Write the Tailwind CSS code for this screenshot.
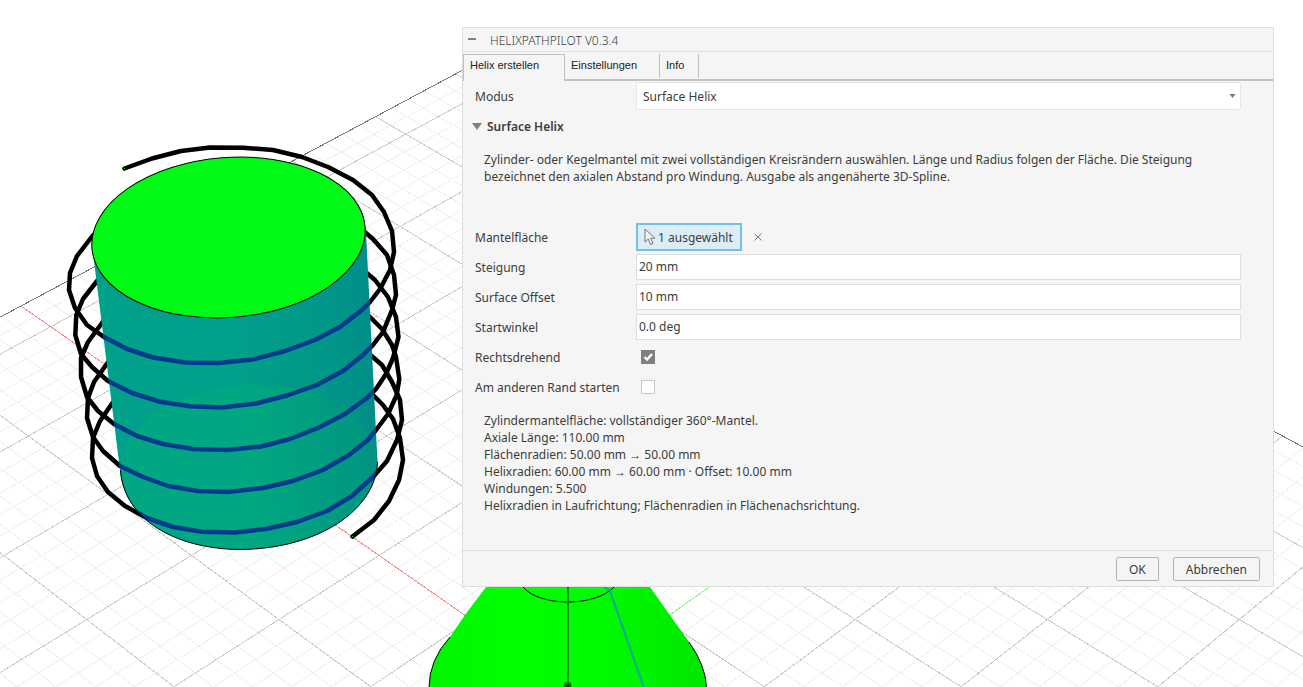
<!DOCTYPE html>
<html lang="de">
  <head>
    <meta charset="UTF-8" />
    <meta name="viewport" content="width=device-width, initial-scale=1.0" />
    <script src="https://cdn.jsdelivr.net/npm/@tailwindcss/browser@4"></script>
    <title>HelixPathPilot</title>
  </head>
  <body class="bg-white">
    <div class="relative w-full h-screen overflow-hidden font-['Noto_Sans',sans-serif] text-[12px] leading-[17px] text-[#3c3c3c]">
      <!-- 3D viewport -->
      <svg class="absolute inset-0 w-full h-full" fill="none" aria-hidden="true">
        <defs>
          <linearGradient id="mantle" x1="92" y1="0" x2="378" y2="0" gradientUnits="userSpaceOnUse">
            <stop offset="0" stop-color="#00a18b" />
            <stop offset="0.5" stop-color="#00a08a" />
            <stop offset="0.8" stop-color="#009888" />
            <stop offset="1" stop-color="#008d88" />
          </linearGradient>
          <linearGradient id="base" x1="92" y1="0" x2="378" y2="0" gradientUnits="userSpaceOnUse">
            <stop offset="0" stop-color="#00a980" />
            <stop offset="0.6" stop-color="#00a87f" />
            <stop offset="1" stop-color="#009580" />
          </linearGradient>
          <linearGradient id="cone" x1="428" y1="0" x2="707" y2="0" gradientUnits="userSpaceOnUse">
            <stop offset="0" stop-color="#00f500" />
            <stop offset="0.25" stop-color="#00fe00" />
            <stop offset="0.6" stop-color="#00fc00" />
            <stop offset="1" stop-color="#00e600" />
          </linearGradient>
          <clipPath id="mantleClip">
            <path d="M92 245L120 470C124 520 176 549 240 549.500C318 549 376 510 377.500 462L366 232Z" />
          </clipPath>
        </defs>

        <!-- ground grid -->
        <g shape-rendering="crispEdges">
          <path id="gridMinor" stroke="#000" stroke-opacity="0.06" />
          <path id="gridMajor" stroke="#000" stroke-opacity="0.2" />
          <path id="gridEdge" stroke="#777" />
          <path id="axisX" stroke="#ff8a8a" />
          <path id="axisY" stroke="#8af58a" />
        </g>

        <!-- helix behind and beside the cylinder -->
        <g stroke="#000" stroke-width="4.500" stroke-linejoin="round" stroke-linecap="round">
          <path d="M124.500 168.500L152 158.500L181 151L210 147.500L243 147.700L273 150L302 157L328 167L353 180L372 195L384 212L392 231L394 252L390 270L380 289L370 302L362 310L340 327L315 340L285 351L253 359.500L218 363L185 362.500L153 357.500L127 349L104 337L87 325L75 308L69 290L70 273L77 256L92 236.500L98 230" />
          <path d="M360 228L373 239L387 255L394 275L396 295L392 310L383 332L373 345L363 355L343 371L317 385L287 395.500L256 403.500L222 407.500L190 406.300L159 401.500L132 393L108 381L92 367L81 354L75.300 335L76.300 315L83 299L97 281L103 274" />
          <path d="M362 269L375 280L388 297L396 317L398.500 337L393 358L386 374L376 389L367 398L345 414L318 428L290 439L260 446.700L227 450L193 449L163 444L137 436L114 424L98 411L87 397L81 377L81 358L88 342L102 323L109 314" />
          <path d="M364 311L382 329L392 345L396 357L399.300 379L396.700 395L388 414L376 430L368 440L349 455L323 470L293 481L263 488L228 492L198 491L168 486L143 477L120 466L103 451L93 437L87 418L88 398L94 382L106 365L113 356" />
          <path d="M367 352L382 365L392 382L400 400L402 420L397 440L387 461L373 477L352 496L327 511L297 522L266 529L235 532.500L202 531.700L173 527L147 518L125 506L108 492L97 476L92 458L93 438L100 421L111 405L118 396" />
          <path d="M369 392L374 396L383 405L393 419L400 438L403 460L399 480L389 501L374 520L352.500 536.500" />
        </g>
        <rect x="124" y="168" width="1" height="1" fill="#0f0" />
        <rect x="352" y="536" width="1" height="1" fill="#0f0" />

        <!-- cylinder -->
        <path d="M92 245L120 470C124 520 176 549 240 549.500C318 549 376 510 377.500 462L366 232Z" fill="url(#mantle)" />
        <g clip-path="url(#mantleClip)">
          <g opacity="0.85">
            <ellipse cx="249" cy="467" rx="129" ry="82" transform="rotate(-3 249 467)" fill="url(#base)" />
          </g>
          <g stroke="#003a8c" stroke-width="4.500" stroke-linejoin="round">
            <path d="M380 289L370 302L362 310L340 327L315 340L285 351L253 359.500L218 363L185 362.500L153 357.500L127 349L104 337L87 325" />
            <path d="M392 310L383 332L373 345L363 355L343 371L317 385L287 395.500L256 403.500L222 407.500L190 406.300L159 401.500L132 393L108 381L92 367" />
            <path d="M386 374L376 389L367 398L345 414L318 428L290 439L260 446.700L227 450L193 449L163 444L137 436L114 424L98 411" />
            <path d="M388 414L376 430L368 440L349 455L323 470L293 481L263 488L228 492L198 491L168 486L143 477L120 466L103 451" />
            <path d="M387 461L373 477L352 496L327 511L297 522L266 529L235 532.500L202 531.700L173 527L147 518L125 506" />
          </g>
        </g>
        <path d="M120.500 470C124 520 176 549 240 549.500C318 549 376 510 377.500 462" stroke="#000" />
        <ellipse cx="228.500" cy="237.500" rx="137" ry="80" transform="rotate(-4.500 228.500 237.500)" fill="#00f915" stroke="#000" />

        <!-- cone -->
        <path d="M486 587L465 615L450 637Q429 660 429 688H706.500Q706 666 689 642L650 587Z" fill="url(#cone)" />
        <path d="M450 637Q429 660 429 688M706.500 688Q706 666 689 642M523 587C540 607 595 607 614 587" stroke="#000" />
        <path d="M568 587V687" stroke="#008a00" stroke-width="2" />
        <path d="M604 587L610 591L644 688" stroke="#00a89a" stroke-width="2" />
        <circle cx="567.500" cy="686" r="4" fill="#007a00" />
        <circle cx="567.500" cy="686" r="1.500" fill="#003800" />
      </svg>

      <!-- command dialog -->
      <form class="absolute top-[27px] left-[462px] right-[29px] bg-[#f5f5f5] border border-[#dedede]">
        <header class="h-6 flex items-center gap-[14px] pl-[5px] border-b border-[#dedede]">
          <button type="button" aria-label="Einklappen" class="w-2 h-0.5 mb-0.5 bg-[#808080]"></button>
          <h1 class="pt-[2px] font-light">HELIXPATHPILOT V0.3.4</h1>
        </header>

        <nav class="h-[29px] pt-0.5 flex font-['Liberation_Sans',sans-serif] text-[11px] text-[#222]">
          <button type="button" class="w-[102px] pl-[6px] pb-[6px] text-left border-t border-r border-l border-[#c0c0c0]">Helix erstellen</button>
          <div class="flex-1 flex items-start border-b-2 border-[#c3c3c3]">
            <button type="button" class="h-6 w-[95px] pl-[6px] pb-0.5 text-left border-r border-[#c0c0c0]">Einstellungen</button>
            <button type="button" class="h-6 w-[39px] pl-[6px] pb-0.5 text-left border-r border-[#c0c0c0]">Info</button>
          </div>
        </nav>

        <div class="pl-3 pr-8">
          <div class="h-[30px] grid grid-cols-[161px_1fr] items-center">
            <label for="mode">Modus</label>
            <div class="relative">
              <select id="mode" class="block w-full h-7 px-[6px] bg-white border border-[#e6e6e6] rounded-[2px] appearance-none">
                <option>Surface Helix</option>
              </select>
              <svg class="absolute right-[5px] top-3 w-[7px] h-1 pointer-events-none" viewBox="0 0 7 4"><path d="M0.500 0H6.500L3.500 4Z" fill="#777" /></svg>
            </div>
          </div>

          <button type="button" class="h-[30px] -ml-[3px] flex items-center gap-[5px] font-semibold">
            <svg class="w-[10px] h-[7px]" viewBox="0 0 10 7"><path d="M0 0H10L5 7Z" fill="#808080" /></svg>
            Surface Helix
          </button>

          <p class="mt-[10px] mb-[37px] pl-[9px]">
            Zylinder- oder Kegelmantel mit zwei vollständigen Kreisrändern auswählen. Länge und Radius folgen der Fläche. Die Steigung<br />
            bezeichnet den axialen Abstand pro Windung. Ausgabe als angenäherte 3D-Spline.
          </p>

          <div class="grid grid-cols-[161px_1fr] auto-rows-[30px] items-center">
            <span>Mantelfläche</span>
            <div class="flex items-center gap-[12px]">
              <button type="button" class="h-7 w-[106px] flex items-center gap-0.5 pl-[6px] bg-[#dcedf7] border-2 border-[#72c1e5] whitespace-nowrap">
                <svg class="w-3 h-[18px] shrink-0" viewBox="0 0 12 18"><path d="M1 1V14L4.200 11L6.500 16.500L9 15.400L6.700 10.200H11Z" fill="#f2f2f2" stroke="#777" /></svg>
                1 ausgewählt
              </button>
              <button type="button" aria-label="Auswahl löschen">
                <svg class="w-2 h-2" viewBox="0 0 8 8"><path d="M0.500 0.500L7.500 7.500M7.500 0.500L0.500 7.500" stroke="#777" /></svg>
              </button>
            </div>

            <label for="pitch">Steigung</label>
            <input id="pitch" type="text" value="20 mm" class="w-full h-[26px] px-0.5 pb-0.5 bg-white border border-[#dedede]" />

            <label for="offset">Surface Offset</label>
            <input id="offset" type="text" value="10 mm" class="w-full h-[26px] px-0.5 pb-0.5 bg-white border border-[#dedede]" />

            <label for="angle">Startwinkel</label>
            <input id="angle" type="text" value="0.0 deg" class="w-full h-[26px] px-0.5 pb-0.5 bg-white border border-[#dedede]" />

            <label for="clockwise">Rechtsdrehend</label>
            <div class="relative h-[14px] pl-[5px]">
              <input id="clockwise" type="checkbox" checked class="block w-[14px] h-[14px] appearance-none border border-[#c8c8c8] bg-white checked:border-[#808080] checked:bg-[#808080]" />
              <svg class="absolute top-0 left-[5px] w-[14px] h-[14px] pointer-events-none" viewBox="0 0 14 14" fill="none"><path d="M3.500 7L6 9.500L11 4" stroke="#fff" stroke-width="2.300" /></svg>
            </div>

            <label for="otherEdge">Am anderen Rand starten</label>
            <div class="h-[14px] pl-[5px]">
              <input id="otherEdge" type="checkbox" class="block w-[14px] h-[14px] appearance-none border border-[#c8c8c8] bg-white checked:bg-[#808080]" />
            </div>
          </div>

          <p class="pt-[10px] pb-[36px] pl-[9px]">
            Zylindermantelfläche: vollständiger 360°-Mantel.<br />
            Axiale Länge: 110.00 mm<br />
            Flächenradien: 50.00 mm → 50.00 mm<br />
            Helixradien: 60.00 mm → 60.00 mm · Offset: 10.00 mm<br />
            Windungen: 5.500<br />
            Helixradien in Laufrichtung; Flächenradien in Flächenachsrichtung.
          </p>
        </div>

        <footer class="h-9 flex items-center justify-end gap-[14px] pt-px pr-[13px] border-t border-[#dedede]">
          <button type="submit" class="h-6 px-3 bg-[#f5f5f5] border border-[#b4b4b4] rounded-[2px]">OK</button>
          <button type="button" class="h-6 px-3 bg-[#f5f5f5] border border-[#b4b4b4] rounded-[2px]">Abbrechen</button>
        </footer>
      </form>
    </div>

    <script>
      // ground plane (i to the upper left, j to the upper right) -> screen
      function project(i, j) {
        const k = i + j;
        const w = 1 + 0.0246 * k;
        const x = (567.5 + 13.5 * k + 98.4 * (j - i)) / w;
        const y = (686.7 - 51.95 * k) / w;
        return x.toFixed(1) + " " + y.toFixed(1);
      }

      function line(i1, j1, i2, j2) {
        return "M" + project(i1, j1) + "L" + project(i2, j2);
      }

      const min = -6.4;
      const maxI = 6.4;
      const maxJ = 6;
      let minor = "";
      let major = "";
      for (let n = -32; n < 32; n++) {
        if (n === 0) continue;
        const v = n / 5;
        let d = line(v, min, v, maxJ);
        if (v < maxJ) d += line(min, v, maxI, v);
        if (n % 5 === 0) major += d;
        else minor += d;
      }

      document.getElementById("gridMinor").setAttribute("d", minor);
      document.getElementById("gridMajor").setAttribute("d", major);
      document.getElementById("gridEdge").setAttribute("d", line(maxI, min, maxI, maxJ) + line(min, maxJ, maxI, maxJ));
      document.getElementById("axisX").setAttribute("d", line(0, 0, maxI, 0));
      document.getElementById("axisY").setAttribute("d", line(0, 0, 0, maxJ));
    </script>
  </body>
</html>
